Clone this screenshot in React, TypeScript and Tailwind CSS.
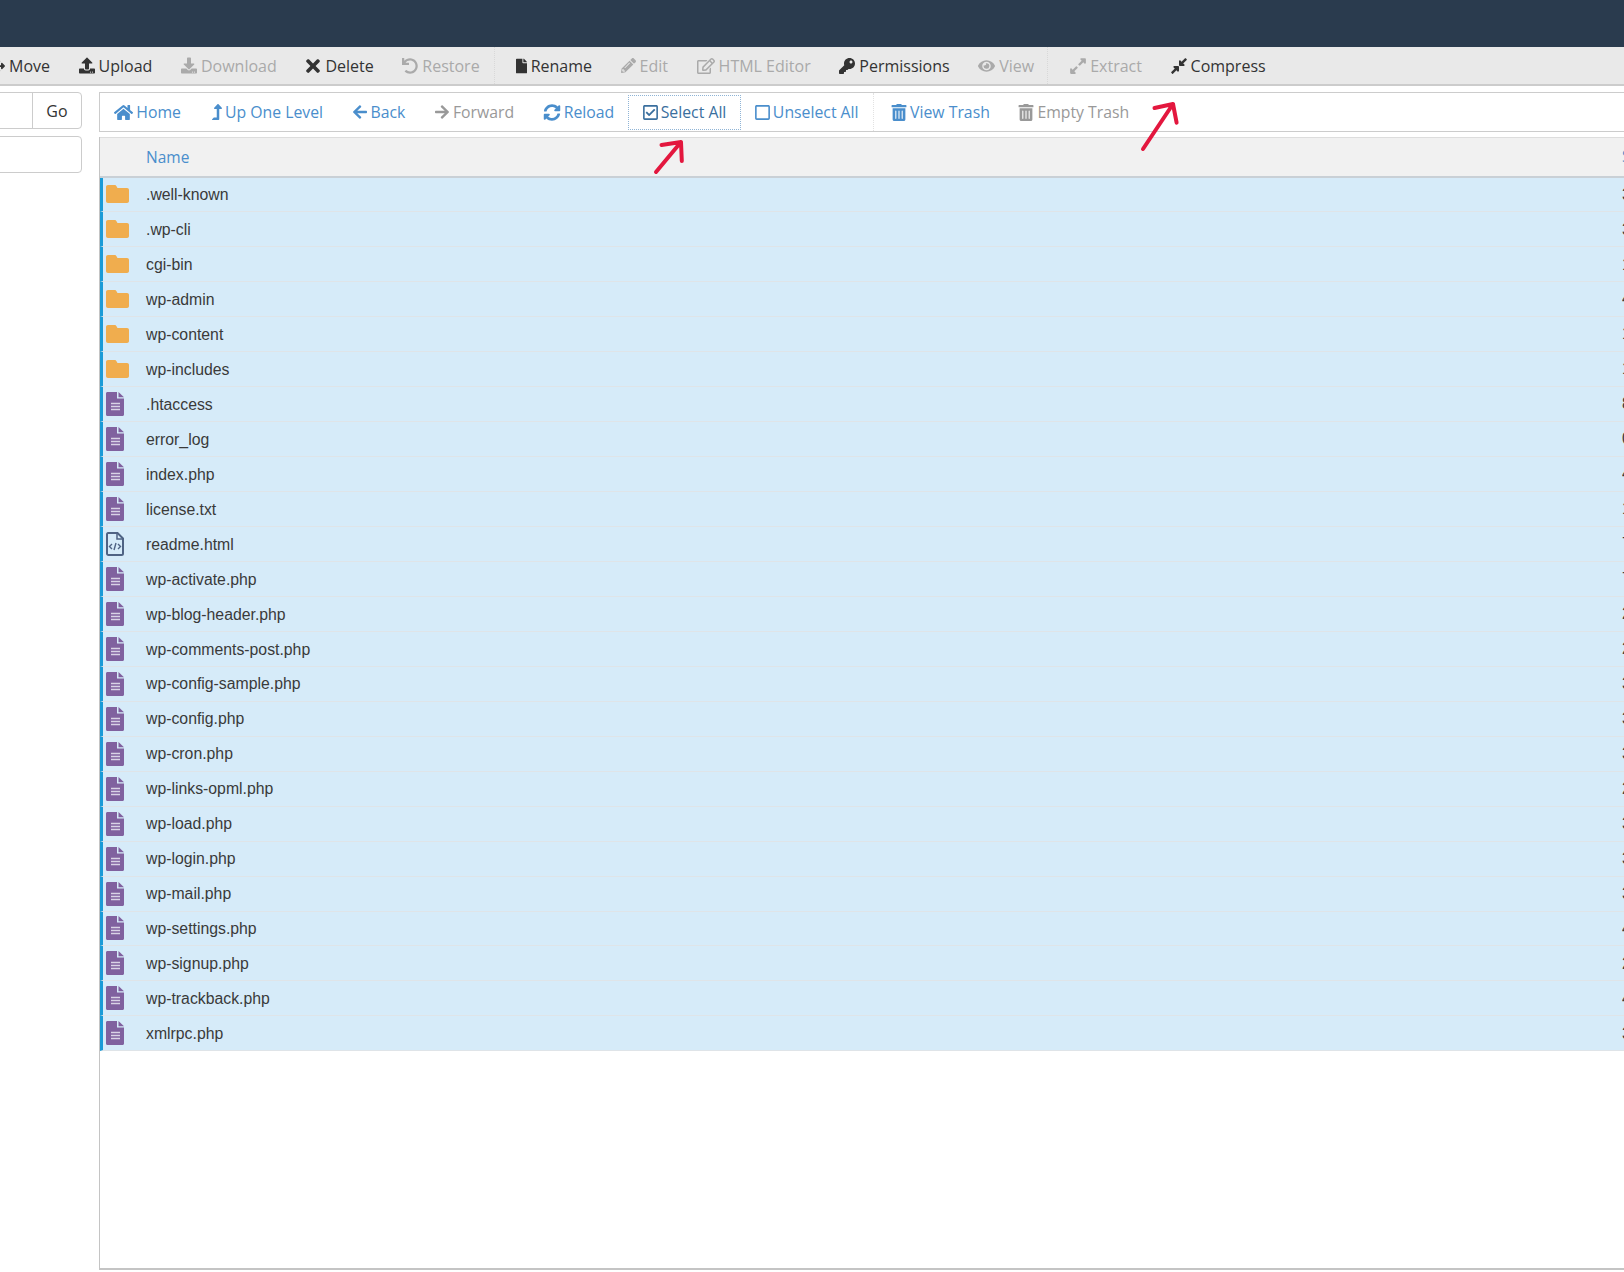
import type { ReactNode } from "react"
import {
    FaArrowLeft,
    FaArrowRight,
    FaArrowsAlt,
    FaCompressAlt,
    FaDownload,
    FaExpandAlt,
    FaEye,
    FaFile,
    FaHome,
    FaKey,
    FaLevelUpAlt,
    FaPencilAlt,
    FaRegCheckSquare,
    FaRegEdit,
    FaRegSquare,
    FaSyncAlt,
    FaTimes,
    FaTrashAlt,
    FaUndo,
    FaUpload,
} from "react-icons/fa"

const folders = [".well-known", ".wp-cli", "cgi-bin", "wp-admin", "wp-content", "wp-includes"]

const files = [
    ".htaccess",
    "error_log",
    "index.php",
    "license.txt",
    "readme.html",
    "wp-activate.php",
    "wp-blog-header.php",
    "wp-comments-post.php",
    "wp-config-sample.php",
    "wp-config.php",
    "wp-cron.php",
    "wp-links-opml.php",
    "wp-load.php",
    "wp-login.php",
    "wp-mail.php",
    "wp-settings.php",
    "wp-signup.php",
    "wp-trackback.php",
    "xmlrpc.php",
]

// first digit of the size column, only a sliver of it shows at the right edge
const sizes = ["3", "3", "1", "4", "1", "1", "8", "0", "4", "1", "7", "7", "2", "2", "3", "3", "3", "2", "3", "3", "3", "4", "2", "4", "3"]

function ToolItem({ icon, label, off }: { icon: ReactNode; label: string; off?: boolean }) {
    return (
        <div className={`flex items-center gap-[4px] text-[16px] whitespace-nowrap ${off ? "text-[#aaaaaa]" : "text-[#333333]"}`}>
            {icon}
            <span>{label}</span>
        </div>
    )
}

function NavItem({ icon, label, tone, boxed }: { icon: ReactNode; label: string; tone: string; boxed?: boolean }) {
    return (
        <div
            className={`flex h-[35px] items-center gap-[3px] border px-[13.250px] text-[15.800px] whitespace-nowrap ${tone} ${
                boxed ? "border-dotted border-[#8fb4d6]" : "border-transparent"
            }`}
        >
            {icon}
            <span className="pt-[1px]">{label}</span>
        </div>
    )
}

function FolderIcon() {
    return (
        <svg viewBox="0 0 23 18" className="h-[18px] w-[23px] shrink-0">
            <path d="M2 0h6.500c1 0 1.500.5 2 1.200L11.500 3H21c1.200 0 2 .8 2 2v11c0 1.200-.8 2-2 2H2c-1.200 0-2-.8-2-2V2C0 .8.800 0 2 0z" fill="#f0ad4e" />
        </svg>
    )
}

function FileIcon() {
    return (
        <svg viewBox="0 0 18 24" className="h-[24px] w-[18px] shrink-0">
            <path d="M1.500 0H11v6.500h7V22.500c0 .9-.6 1.500-1.500 1.500h-15C.6 24 0 23.400 0 22.500v-21C0 .6.600 0 1.500 0z" fill="#80619f" />
            <path d="M12.500 0L18 5.200h-5.500z" fill="#80619f" />
            <path d="M5 11.500h9M5 14.500h9M5 17.500h9" stroke="#d9d3e6" strokeWidth="1.500" />
        </svg>
    )
}

function HtmlFileIcon() {
    return (
        <svg viewBox="0 0 18 24" className="h-[24px] w-[18px] shrink-0" fill="none">
            <path d="M2 1h9.500L17 6.500V21.500c0 .9-.6 1.500-1.500 1.500h-13C1.600 23 1 22.400 1 21.500v-19C1 1.600 1.600 1 2 1z" stroke="#4f6384" strokeWidth="2" />
            <path d="M11 1v6h6" stroke="#4f6384" strokeWidth="1.500" />
            <path d="M6 12l-2.500 2.500L6 17M12 12l2.500 2.500L12 17M10 11l-2 7" stroke="#4f6384" strokeWidth="1.400" />
        </svg>
    )
}

function Row({ name, icon, size }: { name: string; icon: ReactNode; size: string }) {
    return (
        <div className="flex h-[34.960px] items-center border-b border-l-[3px] border-b-[#dfe4e8] border-l-[#1a9bd7] bg-[#d6ebf9] pl-[3px]">
            <div className="flex w-[40px] shrink-0 items-center">{icon}</div>
            <div className="flex-1 pt-[1px] font-['Liberation_Sans',sans-serif] text-[15.800px] text-[#3a3a3a]">{name}</div>
            <div className="w-[2px] shrink-0 overflow-hidden font-['Liberation_Sans',sans-serif] text-[15.800px] text-[#3a3a3a]">{size}</div>
        </div>
    )
}

export default function App() {
    return (
        <div className="relative flex h-[1272px] w-[1624px] flex-col overflow-hidden bg-white font-['Open_Sans',sans-serif]">
            <div className="h-[47px] shrink-0 bg-[#2a3b4e]" />

            {/* action toolbar */}
            <div className="flex h-[39px] shrink-0 items-stretch border-b-2 border-[#cccccc] bg-[#e9e9e9] pl-0">
                <div className="-ml-[11px] flex items-center gap-[28.600px] pr-[14px]">
                    <ToolItem icon={<FaArrowsAlt className="h-4 w-4" />} label="Move" />
                    <ToolItem icon={<FaUpload className="h-[17px] w-[16px]" />} label="Upload" />
                    <ToolItem icon={<FaDownload className="h-[17px] w-[16px]" />} label="Download" off />
                    <ToolItem icon={<FaTimes className="h-[20px] w-[16px]" />} label="Delete" />
                    <ToolItem icon={<FaUndo className="h-[16px] w-[16px]" />} label="Restore" off />
                </div>
                <div className="flex items-center gap-[28.600px] border-l border-dotted border-[#d8d8d8] pr-[13px] pl-[21px]">
                    <ToolItem icon={<FaFile className="h-4 w-[11px]" />} label="Rename" />
                    <ToolItem icon={<FaPencilAlt className="h-[15px] w-[15px]" />} label="Edit" off />
                    <ToolItem icon={<FaRegEdit className="h-4 w-[18px]" />} label="HTML Editor" off />
                    <ToolItem icon={<FaKey className="h-4 w-4" />} label="Permissions" />
                    <ToolItem icon={<FaEye className="h-4 w-[17px]" />} label="View" off />
                </div>
                <div className="flex items-center gap-[28.600px] border-l border-dotted border-[#d8d8d8] pl-[22px]">
                    <ToolItem icon={<FaExpandAlt className="h-[18px] w-4" />} label="Extract" off />
                    <ToolItem icon={<FaCompressAlt className="h-[18px] w-4" />} label="Compress" />
                </div>
            </div>

            <div className="flex min-h-0 flex-1">
                {/* search boxes, cut off by the left edge */}
                <div className="w-[82px] shrink-0 pt-[6px]">
                    <div className="-ml-[2px] flex h-[37px] rounded-r border border-[#cccccc] bg-white">
                        <div className="w-[34px] border-r border-[#cccccc]" />
                        <div className="flex flex-1 items-center justify-center text-[16px] text-[#333333]">Go</div>
                    </div>
                    <div className="-ml-[2px] mt-[7px] h-[37px] rounded-r border border-[#cccccc] bg-white" />
                </div>

                <div className="ml-[17px] flex min-w-0 flex-1 flex-col pt-[6px] pb-[2px]">
                    <div className="flex h-[40px] shrink-0 items-center border border-r-0 border-[#cccccc] bg-white">
                        <div className="mr-[2.500px]">
                            <NavItem icon={<FaHome className="h-[17px] w-[19px]" />} label="Home" tone="text-[#4a8ecc]" />
                        </div>
                        <NavItem icon={<FaLevelUpAlt className="h-4 w-[10px]" />} label="Up One Level" tone="text-[#4a8ecc]" />
                        <NavItem icon={<FaArrowLeft className="h-4 w-[16px]" />} label="Back" tone="text-[#4a8ecc]" />
                        <NavItem icon={<FaArrowRight className="h-4 w-[16px]" />} label="Forward" tone="text-[#999999]" />
                        <NavItem icon={<FaSyncAlt className="h-[17px] w-[18px]" />} label="Reload" tone="text-[#4a8ecc]" />
                        <NavItem icon={<FaRegCheckSquare className="h-[17px] w-[15px]" />} label="Select All" tone="text-[#3a6f9e]" boxed />
                        <NavItem icon={<FaRegSquare className="h-[17px] w-[15px]" />} label="Unselect All" tone="text-[#4a8ecc]" />
                        <div className="flex h-full items-center gap-0 border-l border-dotted border-[#e2e2e2] pl-[3px]">
                            <NavItem icon={<FaTrashAlt className="h-[17px] w-[16px]" />} label="View Trash" tone="text-[#4a8ecc]" />
                            <NavItem icon={<FaTrashAlt className="h-[17px] w-[16px]" />} label="Empty Trash" tone="text-[#999999]" />
                        </div>
                    </div>

                    <div className="mt-[5px] flex min-h-0 flex-1 flex-col border-b-2 border-l border-[#c4c4c4]">
                        <div className="flex h-[40.500px] shrink-0 items-center border-t border-b-2 border-t-[#dddddd] border-b-[#c9d0d6] bg-[#f1f1f1] pl-[46px]">
                            <div className="flex-1 pt-[2px] text-[15.500px] text-[#4a8ecc]">Name</div>
                            <div className="w-[2px] shrink-0 overflow-hidden text-[15.500px] text-[#4a8ecc]">S</div>
                        </div>
                        {folders.map((name, i) => (
                            <Row key={name} name={name} icon={<FolderIcon />} size={sizes[i]} />
                        ))}
                        {files.map((name, i) => (
                            <Row
                                key={name}
                                name={name}
                                icon={name === "readme.html" ? <HtmlFileIcon /> : <FileIcon />}
                                size={sizes[i + folders.length]}
                            />
                        ))}
                    </div>
                </div>
            </div>

            {/* red arrows drawn on the screenshot */}
            <svg viewBox="0 0 36 38" className="absolute top-[138px] left-[650px] h-[38px] w-[36px]" fill="none">
                <path d="M6 34L31 4M11.500 7L31 4l.8 19" stroke="#e3173e" strokeWidth="4" strokeLinecap="round" strokeLinejoin="round" />
            </svg>
            <svg viewBox="0 0 44 54" className="absolute top-[100px] left-[1138px] h-[54px] w-[44px]" fill="none">
                <path d="M5 49L35 4M16.500 8L35 4l3.600 18.700" stroke="#e3173e" strokeWidth="4" strokeLinecap="round" strokeLinejoin="round" />
            </svg>
        </div>
    )
}
